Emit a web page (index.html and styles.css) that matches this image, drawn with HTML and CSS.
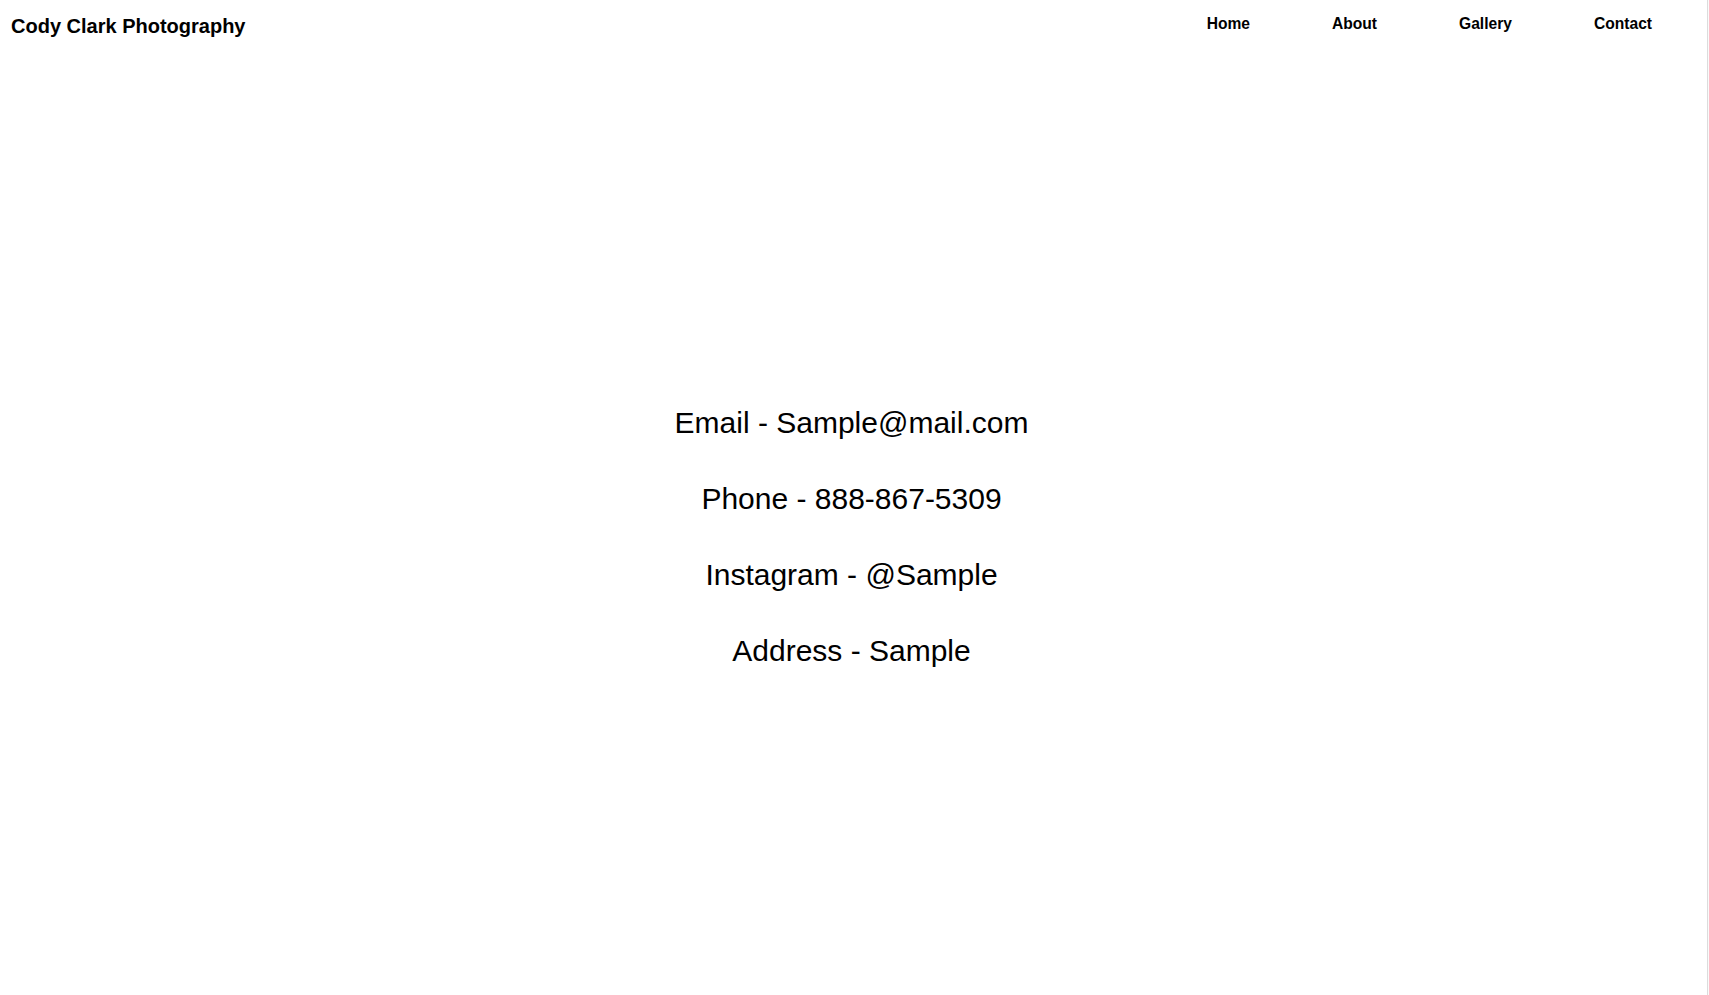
FILE: index.html
```html
<!DOCTYPE html>
<html lang="en">
<head>
<meta charset="utf-8">
<title>Contact - Cody Clark Photography</title>
<link rel="stylesheet" href="styles.css">
</head>
<body>
<header class="site-header">
  <div class="brand">Cody Clark Photography</div>
  <nav class="nav">
    <a class="nav-link" href="#">Home</a>
    <a class="nav-link" href="#">About</a>
    <a class="nav-link" href="#">Gallery</a>
    <a class="nav-link" href="#">Contact</a>
  </nav>
</header>
<main class="contact">
  <p class="contact-line">Email - Sample@mail.com</p>
  <p class="contact-line">Phone - 888-867-5309</p>
  <p class="contact-line">Instagram - @Sample</p>
  <p class="contact-line">Address - Sample</p>
</main>
</body>
</html>
```
FILE: styles.css
```css
html {
  height: 100%;
  background: linear-gradient(to left, #fafafa 0 1px, #dcdcdc 1px 2px, #ffffff 2px);
}
body {
  margin: 0;
  font-family: "Liberation Sans", Arial, sans-serif;
  color: #000;
}
.site-header {
  display: flex;
  justify-content: space-between;
  align-items: flex-start;
  padding: 13px 57px 0 11px;
}
.brand {
  font-size: 20px;
  font-weight: bold;
  line-height: 24px;
  padding-top: 1px;
}
.nav {
  display: flex;
  gap: 82px;
  padding-top: 1px;
}
.nav-link {
  font-size: 15.6px;
  font-weight: bold;
  line-height: 20px;
  color: #000;
  text-decoration: none;
}
.contact {
  display: flex;
  flex-direction: column;
  align-items: center;
  gap: 42px;
  padding: 368px 6px 0 0;
}
.contact-line {
  margin: 0;
  font-size: 30px;
  line-height: 34px;
}
```
